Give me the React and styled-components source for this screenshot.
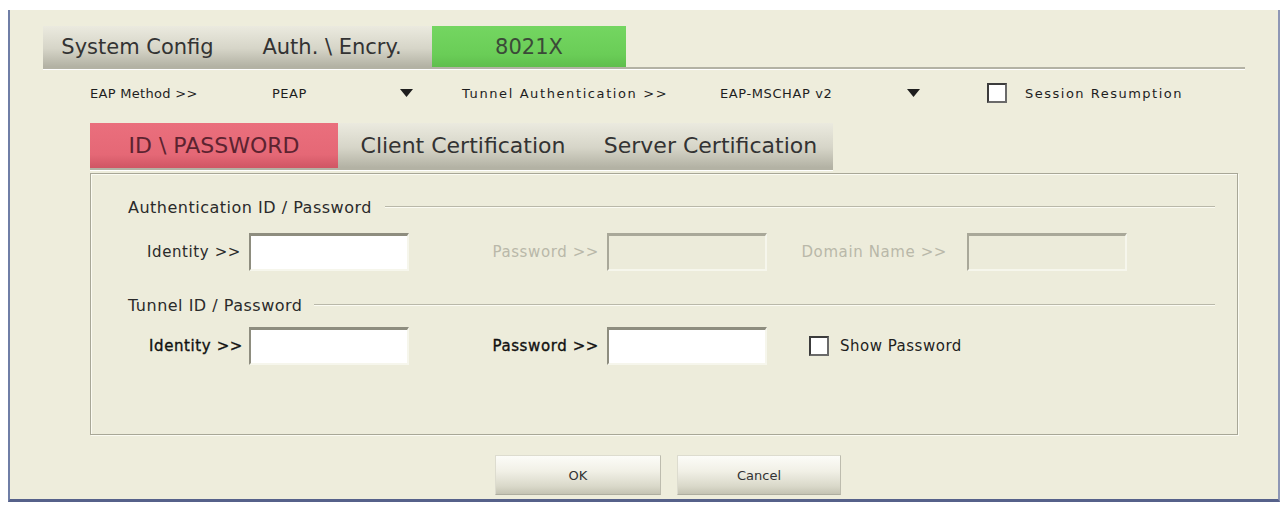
import React from "react";
import styled, { createGlobalStyle, css } from "styled-components";

const Global = createGlobalStyle`
  html, body { margin: 0; padding: 0; background: #ffffff; }
  body { font-family: "DejaVu Sans", "Liberation Sans", sans-serif; }
  * { box-sizing: border-box; }
`;

const Frame = styled.div`
  margin: 10px 0 0 8px;
  width: 1272px;
  height: 492px;
  background: #eeeddc;
  border-left: 2px solid #6f7ea6;
  border-right: 2px solid #8e97b5;
  border-bottom: 3px solid #56618a;
  box-shadow: 0 2px 0 #b9c0da;
  overflow: hidden;
  display: flex;
  flex-direction: column;
`;

const TopTabs = styled.div`
  margin: 16px 0 0 33px;
  width: 1202px;
  height: 43px;
  display: flex;
  border-bottom: 2px solid #b3b2a4;
  box-shadow: 0 1px 0 #ffffff;
`;

const grayTab = css`
  background: linear-gradient(180deg, #ebeadf 0%, #d6d5c8 55%, #b2b1a3 100%);
  color: #333333;
`;

const TopTab = styled.div`
  width: ${(p) => p.$w}px;
  height: 41px;
  display: flex;
  align-items: center;
  justify-content: center;
  font-size: 21px;
  ${(p) =>
    p.$active
      ? css`
          background: linear-gradient(180deg, #74d661 0%, #6acd57 70%, #5fbe4d 100%);
          color: #3b4a38;
        `
      : grayTab}
`;

const OptionRow = styled.div`
  margin: 13px 0 0 80px;
  height: 22px;
  display: flex;
  align-items: center;
`;

const OptCell = styled.div`
  width: ${(p) => p.$w}px;
  flex: none;
  display: flex;
  align-items: center;
  font-size: 13px;
  letter-spacing: ${(p) => p.$ls || 0}px;
  color: #1e1e1e;
`;

const Arrow = () => (
  <svg width="13" height="8" viewBox="0 0 13 8">
    <polygon points="0,0 13,0 6.5,8" fill="#1e1e1e" />
  </svg>
);

const Check = styled.span`
  width: 20px;
  height: 20px;
  flex: none;
  border: 2px solid #3c3c3c;
  border-right-color: #6a6a6a;
  border-bottom-color: #6a6a6a;
  background: #ffffff;
  margin-left: ${(p) => p.$ml || 0}px;
  margin-right: ${(p) => p.$mr}px;
`;

const SubTabs = styled.div`
  margin: 19px 0 0 80px;
  display: flex;
  align-self: flex-start;
  border-bottom: 2px solid #b3b2a4;
  box-shadow: 0 1px 0 #ffffff;
`;

const SubTab = styled.div`
  width: ${(p) => p.$w}px;
  height: 45px;
  display: flex;
  align-items: center;
  justify-content: center;
  font-size: 22px;
  ${(p) =>
    p.$active
      ? css`
          background: linear-gradient(180deg, #ea6f7d 0%, #e56876 70%, #cf5664 100%);
          color: #5c2330;
        `
      : grayTab}
`;

const Panel = styled.div`
  margin: 3px 0 0 80px;
  width: 1148px;
  height: 262px;
  border: 1px solid #a8a797;
  box-shadow: inset 1px 1px 0 #fbfbf2, 1px 1px 0 #fbfbf2;
  background: #edecdb;
  padding: 25px 22px 0 37px;
  display: flex;
  flex-direction: column;
`;

const GroupHead = styled.div`
  display: flex;
  align-items: center;
  height: 16px;
  margin-top: ${(p) => p.$mt}px;
  font-size: 16px;
  letter-spacing: 0.5px;
  color: #2a2a2a;
`;

const GroupLine = styled.div`
  flex: 1;
  margin-left: ${(p) => p.$gap}px;
  border-top: 1px solid #b9b8a9;
  border-bottom: 1px solid #fbfbf2;
`;

const FieldRow = styled.div`
  display: flex;
  align-items: center;
  height: 38px;
  margin-top: ${(p) => p.$mt}px;
`;

const Label = styled.div`
  width: ${(p) => p.$w}px;
  flex: none;
  text-align: right;
  padding-right: ${(p) => p.$pr}px;
  font-size: 15px;
  letter-spacing: 0.6px;
  color: ${(p) => (p.$disabled ? "#b9b8a9" : p.$dark ? "#111111" : "#2a2a2a")};
  -webkit-text-stroke: ${(p) => (p.$dark ? "0.35px #111111" : "0")};
`;

const Input = styled.div`
  width: 160px;
  height: 38px;
  flex: none;
  background: ${(p) => (p.$disabled ? "#ecebda" : "#ffffff")};
  border-top: 3px solid ${(p) => (p.$disabled ? "#a9a899" : "#8e8d7f")};
  border-left: 2px solid ${(p) => (p.$disabled ? "#a9a899" : "#8e8d7f")};
  border-right: 2px solid #f6f6ec;
  border-bottom: 2px solid #f6f6ec;
`;

const CheckText = styled.span`
  font-size: 15px;
  letter-spacing: 0.5px;
  color: #1e1e1e;
`;

const ButtonRow = styled.div`
  margin: 20px 0 0 485px;
  display: flex;
  gap: 16px;
`;

const Button = styled.div`
  width: ${(p) => p.$w}px;
  height: 40px;
  display: flex;
  align-items: center;
  justify-content: center;
  font-size: 13px;
  color: #333333;
  background: linear-gradient(180deg, #fcfcf8 0%, #f1f0e6 40%, #d9d8c9 80%, #c4c3b3 100%);
  border: 1px solid #dddccf;
  border-bottom-color: #aeada0;
  border-right-color: #bdbcae;
`;

export default function App() {
  return (
    <>
      <Global />
      <Frame>
        <TopTabs>
          <TopTab $w={189}>System Config</TopTab>
          <TopTab $w={200}>Auth. \ Encry.</TopTab>
          <TopTab $w={194} $active>
            8021X
          </TopTab>
        </TopTabs>

        <OptionRow>
          <OptCell $w={182} $ls={0.3}>EAP Method &gt;&gt;</OptCell>
          <OptCell $w={128} $ls={0.5}>PEAP</OptCell>
          <OptCell $w={62}>
            <Arrow />
          </OptCell>
          <OptCell $w={258} $ls={1.6}>Tunnel Authentication &gt;&gt;</OptCell>
          <OptCell $w={187} $ls={0.6}>EAP-MSCHAP v2</OptCell>
          <OptCell $w={80}>
            <Arrow />
          </OptCell>
          <OptCell $w={240} $ls={1.5}>
            <Check $mr={18} />
            Session Resumption
          </OptCell>
        </OptionRow>

        <SubTabs>
          <SubTab $w={248} $active>
            ID \ PASSWORD
          </SubTab>
          <SubTab $w={250}>Client Certification</SubTab>
          <SubTab $w={245}>Server Certification</SubTab>
        </SubTabs>

        <Panel>
          <GroupHead $mt={0}>
            Authentication ID / Password
            <GroupLine $gap={13} />
          </GroupHead>
          <FieldRow $mt={18}>
            <Label $w={121} $pr={8}>Identity &gt;&gt;</Label>
            <Input />
            <Label $w={198} $pr={8} $disabled>
              Password &gt;&gt;
            </Label>
            <Input $disabled />
            <Label $w={200} $pr={20} $disabled>
              Domain Name &gt;&gt;
            </Label>
            <Input $disabled />
          </FieldRow>

          <GroupHead $mt={26}>
            Tunnel ID / Password
            <GroupLine $gap={12} />
          </GroupHead>
          <FieldRow $mt={14}>
            <Label $w={121} $pr={6} $dark>
              Identity &gt;&gt;
            </Label>
            <Input />
            <Label $w={198} $pr={8} $dark>
              Password &gt;&gt;
            </Label>
            <Input />
            <Check $ml={42} $mr={11} />
            <CheckText>Show Password</CheckText>
          </FieldRow>
        </Panel>

        <ButtonRow>
          <Button $w={166}>OK</Button>
          <Button $w={164}>Cancel</Button>
        </ButtonRow>
      </Frame>
    </>
  );
}
